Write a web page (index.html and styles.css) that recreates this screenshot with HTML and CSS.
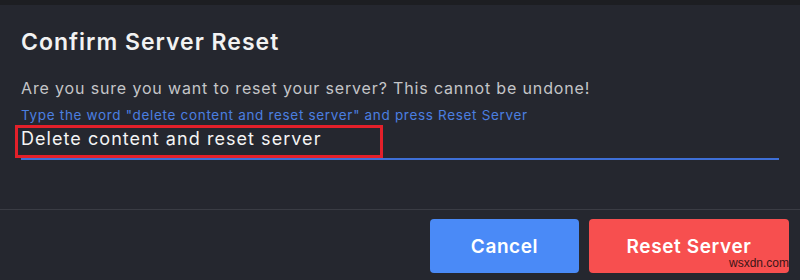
FILE: index.html
```html
<!DOCTYPE html>
<html>
<head>
<meta charset="utf-8">
<link rel="stylesheet" href="styles.css">
</head>
<body>
<div class="topbar"></div>
<div class="dialog">
  <div class="content">
    <h1 class="title">Confirm Server Reset</h1>
    <p class="desc">Are you sure you want to reset your server? This cannot be undone!</p>
    <p class="hint">Type the word "delete content and reset server" and press Reset Server</p>
    <div class="field">
      <div class="value">Delete content and reset server</div>
      <div class="highlight"></div>
    </div>
  </div>
  <div class="footer">
    <button class="btn btn-cancel">Cancel</button>
    <button class="btn btn-reset">Reset Server</button>
    <span class="watermark">wsxdn.com</span>
  </div>
</div>
</body>
</html>
```
FILE: styles.css
```css
* { box-sizing: border-box; }
html, body { margin: 0; padding: 0; }
body {
  width: 800px;
  height: 280px;
  overflow: hidden;
  background: #25272f;
  font-family: Inter, "Open Sans", "DejaVu Sans", sans-serif;
}
.topbar { height: 5px; background: #1d1e22; }
.dialog { position: relative; }
.content { padding: 0 21px; }
.title {
  margin: 23px 0 0;
  font-size: 23px;
  line-height: 28px;
  font-weight: 600;
  color: #f2f2f2;
  letter-spacing: 1px;
}
.desc {
  margin: 22px 0 0;
  font-size: 16px;
  line-height: 20px;
  color: #c4c5c8;
  letter-spacing: 0.85px;
}
.hint {
  margin: 8px 0 0;
  font-size: 13.5px;
  line-height: 18px;
  color: #4b7fe0;
  letter-spacing: 0.68px;
}
.field {
  position: relative;
  margin-top: 3px;
  border-bottom: 2px solid #3e6fd6;
  padding-bottom: 7px;
}
.value {
  font-size: 18px;
  line-height: 24px;
  color: #f4f4f4;
  letter-spacing: 1.05px;
}
.highlight {
  position: absolute;
  left: -6px;
  top: -2px;
  width: 368px;
  height: 33px;
  border: 3px solid #e3202a;
}
.footer {
  margin-top: 49px;
  border-top: 1px solid #3a3c44;
  padding: 9px 11px 0 0;
  display: flex;
  justify-content: flex-end;
  gap: 10px;
}
.btn {
  height: 54px;
  border: none;
  border-radius: 4px;
  color: #ffffff;
  font-family: inherit;
  font-size: 19px;
  font-weight: 600;
  letter-spacing: 0.6px;
}
.btn-cancel { width: 149px; background: #4a8af7; }
.btn-reset { width: 200px; background: #f74f4f; }
.watermark {
  position: absolute;
  right: 11px;
  bottom: 3px;
  font-family: "Liberation Sans", Arial, sans-serif;
  font-size: 12px;
  color: #3b1616;
}
```
